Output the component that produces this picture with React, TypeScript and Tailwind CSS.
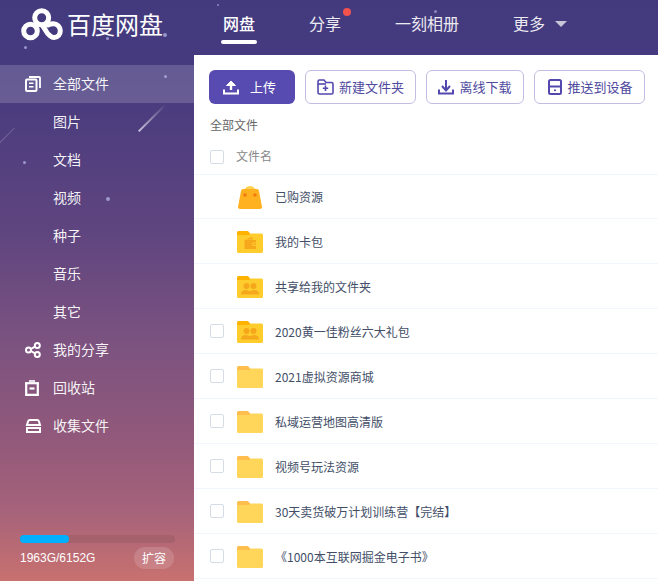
import React from "react";

const font = { fontFamily: '"Noto Sans CJK SC", "Liberation Sans", sans-serif' };

function Logo() {
  return (
    <svg width="42" height="33" viewBox="0 0 42 33" fill="none" stroke="#fff" strokeWidth="5" strokeLinecap="round" className="shrink-0">
      <circle cx="9.5" cy="23" r="6.8" />
      <circle cx="20.7" cy="9.7" r="7" />
      <path d="M21.5 17.5 L25 23 C27 27 31 29.7 33 29.5 C37 29.3 39.3 26 39.3 22.7 C39.3 18.7 36 15.8 32.5 15.8 C30.5 15.8 28.5 16.2 27 17" />
    </svg>
  );
}

function Star({ x, y, s = 3 }: { x: number; y: number; s?: number }) {
  return (
    <span
      className="absolute rounded-full bg-[#b9bde8] opacity-70 blur-[0.5px]"
      style={{ left: x, top: y, width: s, height: s }}
    />
  );
}

function Folder({ kind }: { kind: "plain" | "share" | "wallet" | "bag" }) {
  if (kind === "bag") {
    return (
      <svg width="24" height="23" viewBox="0 0 24 23">
        <path d="M6.5 4 C8 -1.2 16 -1.2 17.5 4 Z" fill="#ffd34f" />
        <path d="M5 3 H19 Q20.6 3 21 5 L24 21 Q24.2 23 22 23 H2 Q-0.2 23 0 21 L3 5 Q3.4 3 5 3 Z" fill="#ffb11f" />
        <circle cx="7" cy="9" r="1.8" fill="#f07a10" />
        <circle cx="17" cy="9" r="1.8" fill="#f07a10" />
      </svg>
    );
  }
  const front = kind === "plain" ? "#ffd659" : "#ffcc2e";
  const back = kind === "plain" ? "#ffbe4d" : "#ffb300";
  return (
    <svg width="26" height="22" viewBox="0 0 26 22">
      <path d="M0 1.5 Q0 0 1.5 0 H11 L13.5 3 H24 V8 H0 Z" fill={back} />
      <path d="M0 4 H12 L13.5 2.5 H24.5 Q26 2.5 26 4 V20.5 Q26 22 24.5 22 H1.5 Q0 22 0 20.5 Z" fill={front} />
      {kind === "share" && (
        <g fill="#f6a81c">
          <circle cx="9.5" cy="10" r="3" />
          <circle cx="16.5" cy="10" r="3" />
          <path d="M4 18.5 Q4 14 9 14 Q12 14 13 15.5 Q14 14 17 14 Q22 14 22 18.5 Z" />
        </g>
      )}
      {kind === "wallet" && (
        <g fill="#f6a81c">
          <path d="M8 8.5 L15 6 L16 8.5 Z" />
          <path d="M7.5 9 H19 V11.5 H15.5 V15 H19 V18 H7.5 Z" />
          <rect x="16.5" y="12.5" width="2.5" height="1.5" />
        </g>
      )}
    </svg>
  );
}

const P = "#5248ad";

function UploadIcon() {
  return (
    <svg width="16" height="16" viewBox="0 0 16 16" fill="none" stroke="#fff" strokeWidth="2">
      <path d="M1 11.5 V14.5 H15 V11.5" strokeLinecap="square" />
      <path d="M8 11 V3" strokeWidth="2.4" />
      <path d="M3.5 6.5 L8 2 L12.5 6.5 Z" fill="#fff" strokeWidth="1" />
    </svg>
  );
}
function NewFolderIcon() {
  return (
    <svg width="17" height="16" viewBox="0 0 17 16" fill="none" stroke={P} strokeWidth="1.6">
      <path d="M1 2.5 Q1 1 2.5 1 H7 L9 3.5 H14.5 Q16 3.5 16 5 V13.5 Q16 15 14.5 15 H2.5 Q1 15 1 13.5 Z" />
      <path d="M1 5 H9" />
      <path d="M8.5 6.5 V12 M5.8 9.2 H11.2" />
    </svg>
  );
}
function DownloadIcon() {
  return (
    <svg width="16" height="16" viewBox="0 0 16 16" fill="none" stroke={P} strokeWidth="2">
      <path d="M1 11.5 V14.5 H15 V11.5" strokeLinecap="square" />
      <path d="M8 1 V10" />
      <path d="M4 7 L8 11.5 L12 7" />
    </svg>
  );
}
function DeviceIcon() {
  return (
    <svg width="14" height="16" viewBox="0 0 14 16" fill="none" stroke={P} strokeWidth="2">
      <rect x="1" y="1" width="12" height="14" rx="1.5" />
      <path d="M1 7.5 H13" />
      <rect x="6" y="10.5" width="2" height="1.6" fill={P} stroke="none" />
    </svg>
  );
}
function FilesIcon() {
  return (
    <svg width="16" height="16" viewBox="0 0 16 16" fill="none" stroke="#fff" strokeWidth="2">
      <rect x="1" y="3.5" width="10.5" height="11.5" rx="1" />
      <path d="M4 1 H14 Q15 1 15 2 V12" strokeWidth="1.8" />
      <path d="M4 7.2 H8.5 M4 10.8 H8.5" strokeWidth="1.6" />
    </svg>
  );
}
function ShareIcon() {
  return (
    <svg width="16" height="16" viewBox="0 0 16 16" fill="none" stroke="#fff" strokeWidth="2">
      <circle cx="3.5" cy="8" r="2.5" />
      <circle cx="12.3" cy="3.5" r="2.5" />
      <circle cx="12.3" cy="12.5" r="2.5" />
      <path d="M5.8 7 L10 4.6 M5.8 9 L10 11.4" />
    </svg>
  );
}
function TrashIcon() {
  return (
    <svg width="14" height="16" viewBox="0 0 14 16" fill="none" stroke="#fff" strokeWidth="2.2">
      <path d="M0 3.2 H14" />
      <path d="M4 1 H10" strokeWidth="1.6" />
      <path d="M1.2 3 V14.9 H12.8 V3" />
      <path d="M4.5 8.5 H9.5" />
    </svg>
  );
}
function CollectIcon() {
  return (
    <svg width="17" height="14" viewBox="0 0 17 14" fill="none" stroke="#fff" strokeWidth="2">
      <path d="M2 6 L3 2.5 Q3.4 1 5 1 H12 Q13.6 1 14 2.5 L15 6 Z" />
      <path d="M2 13 V9 H15 V13 Z" />
    </svg>
  );
}

const nav: { label: string; icon?: React.ReactNode; active?: boolean }[] = [
  { label: "全部文件", icon: <FilesIcon />, active: true },
  { label: "图片" },
  { label: "文档" },
  { label: "视频" },
  { label: "种子" },
  { label: "音乐" },
  { label: "其它" },
  { label: "我的分享", icon: <ShareIcon /> },
  { label: "回收站", icon: <TrashIcon /> },
  { label: "收集文件", icon: <CollectIcon /> },
];

const files: { name: string; kind: "plain" | "share" | "wallet" | "bag"; check: boolean }[] = [
  { name: "已购资源", kind: "bag", check: false },
  { name: "我的卡包", kind: "wallet", check: false },
  { name: "共享给我的文件夹", kind: "share", check: false },
  { name: "2020黄一佳粉丝六大礼包", kind: "share", check: true },
  { name: "2021虚拟资源商城", kind: "plain", check: true },
  { name: "私域运营地图高清版", kind: "plain", check: true },
  { name: "视频号玩法资源", kind: "plain", check: true },
  { name: "30天卖货破万计划训练营【完结】", kind: "plain", check: true },
  { name: "《1000本互联网掘金电子书》", kind: "plain", check: true },
];

function Check() {
  return <span className="block w-[14px] h-[14px] rounded-[2px] border border-[#d5dce6] bg-white" />;
}

function OutlineBtn({ icon, label, w, extra = "" }: { icon: React.ReactNode; label: string; w: string; extra?: string }) {
  return (
    <button className={`${w} ${extra} h-[34px] shrink-0 flex items-center justify-center gap-[5px] rounded-[6px] border border-[#c3bde3] bg-white text-[13px] text-[#4f4a9e]`}>
      {icon}
      <span>{label}</span>
    </button>
  );
}

export default function App() {
  return (
    <div
      style={font}
      className="relative w-[658px] h-[581px] overflow-hidden flex flex-col bg-[linear-gradient(180deg,#433a7e_0%,#463a7f_12%,#5f457f_40%,#7a5280_58%,#955a7a_78%,#a6637a_88%,#c9716f_100%)]"
    >
      <header className="h-[55px] shrink-0 flex items-center pb-[9px]">
        <div className="w-[194px] shrink-0 flex items-center pl-[21px] pt-[2px]">
          <Logo />
          <span className="ml-[4px] text-[24px] leading-[32px] text-white whitespace-nowrap">百度网盘</span>
        </div>
        <nav className="flex items-center gap-[54px] pl-[29px] text-[16px] text-white/90">
          <span className="relative text-white font-medium">
            网盘
            <span className="absolute left-0 right-0 top-[29px] -mx-[2px] h-[3.5px] rounded-full bg-white" />
          </span>
          <span className="relative">
            分享
            <span className="absolute -right-[10px] top-[-3px] w-[8px] h-[8px] rounded-full bg-[#f4524d]" />
          </span>
          <span>一刻相册</span>
          <span className="relative flex items-center">
            更多
            <span className="absolute left-[42px] top-[10px] w-0 h-0 border-x-[6px] border-x-transparent border-t-[6px] border-t-[#c9c6d8]" />
          </span>
        </nav>
      </header>

      <div className="flex-1 flex min-h-0">
        <aside className="relative w-[194px] shrink-0 flex flex-col pt-[10px]">
          {nav.map((n) => (
            <div
              key={n.label}
              className={`relative h-[38px] shrink-0 flex items-center text-[14px] text-white/95 ${n.active ? "bg-white/[0.17]" : ""}`}
            >
              <span className="w-[53px] shrink-0 flex justify-start pl-[25px]">{n.icon}</span>
              <span className="pb-[2px]">{n.label}</span>
            </div>
          ))}
          <div className="mt-auto pb-[12px] px-[20px]">
            <div className="w-[155px] h-[8px] rounded-full bg-[#a5626d]">
              <div className="w-[49px] h-full rounded-full bg-[#00b0ff]" />
            </div>
            <div className="mt-[4px] flex items-center justify-between">
              <span className="text-[12px] text-white" style={{ fontFamily: '"Liberation Sans", sans-serif' }}>1963G/6152G</span>
              <span className="w-[40px] h-[22px] rounded-full bg-white/[0.14] flex items-center justify-center text-[12px] text-white">扩容</span>
            </div>
          </div>
        </aside>

        <main className="flex-1 min-w-0 bg-white flex flex-col pt-[15px]">
          <div className="flex gap-[10px] pl-[15px]">
            <button className="w-[86px] h-[34px] shrink-0 flex items-center justify-start pl-[14px] gap-[11px] rounded-[6px] bg-[#574ab0] text-[13px] text-white">
              <UploadIcon />
              <span>上传</span>
            </button>
            <OutlineBtn w="w-[111px]" icon={<NewFolderIcon />} label="新建文件夹" />
            <OutlineBtn w="w-[98px]" icon={<DownloadIcon />} label="离线下载" />
            <OutlineBtn w="w-[111px]" extra="pl-[2px]" icon={<DeviceIcon />} label="推送到设备" />
          </div>
          <div className="pl-[16px] mt-[12px] h-[18px] leading-[18px] text-[12px] text-[#666]">全部文件</div>
          <div className="h-[36px] mt-[5px] flex items-center border-b border-[#f2f6fd] pl-[16px] text-[12px] text-[#888]">
            <Check />
            <span className="ml-[12px] pb-[2px]">文件名</span>
          </div>
          {files.map((f, i) => (
            <div key={f.name} className={`${i === 0 ? "h-[44px]" : "h-[45px]"} shrink-0 flex items-center border-b border-[#f2f6fd] pl-[16px]`}>
              <span className="w-[14px] shrink-0">{f.check && <Check />}</span>
              <span className="ml-[13px] w-[26px] shrink-0 flex items-center justify-center pt-[2px]">
                <Folder kind={f.kind} />
              </span>
              <span className={`ml-[12px] text-[12px] text-[#424e67] whitespace-nowrap ${i === 0 ? "" : "pt-[2px]"}`}>{f.name}</span>
            </div>
          ))}
        </main>
      </div>

      <div className="absolute left-0 top-0 w-[194px] h-[581px] pointer-events-none">
        <Star x={24} y={46} />
        <Star x={163} y={33} s={4} />
        <Star x={106} y={37} s={3} />
        <Star x={164} y={75} s={3} />
        <Star x={23} y={161} />
        <Star x={106} y={197} s={4} />
        <span className="absolute left-[133px] top-[117px] w-[38px] h-[1.5px] -rotate-45 bg-gradient-to-r from-white/70 to-white/0" />
        <span className="absolute left-[-6px] top-[136px] w-[24px] h-[1px] -rotate-45 bg-white/20" />
      </div>
      <div className="absolute left-[217px] top-[4px] w-[2px] h-[2px] rounded-full bg-[#b9bde8]/60 pointer-events-none" />
      <div className="absolute left-[434px] top-[10px] w-[3px] h-[3px] rounded-full bg-[#b9bde8]/60 pointer-events-none" />
    </div>
  );
}
